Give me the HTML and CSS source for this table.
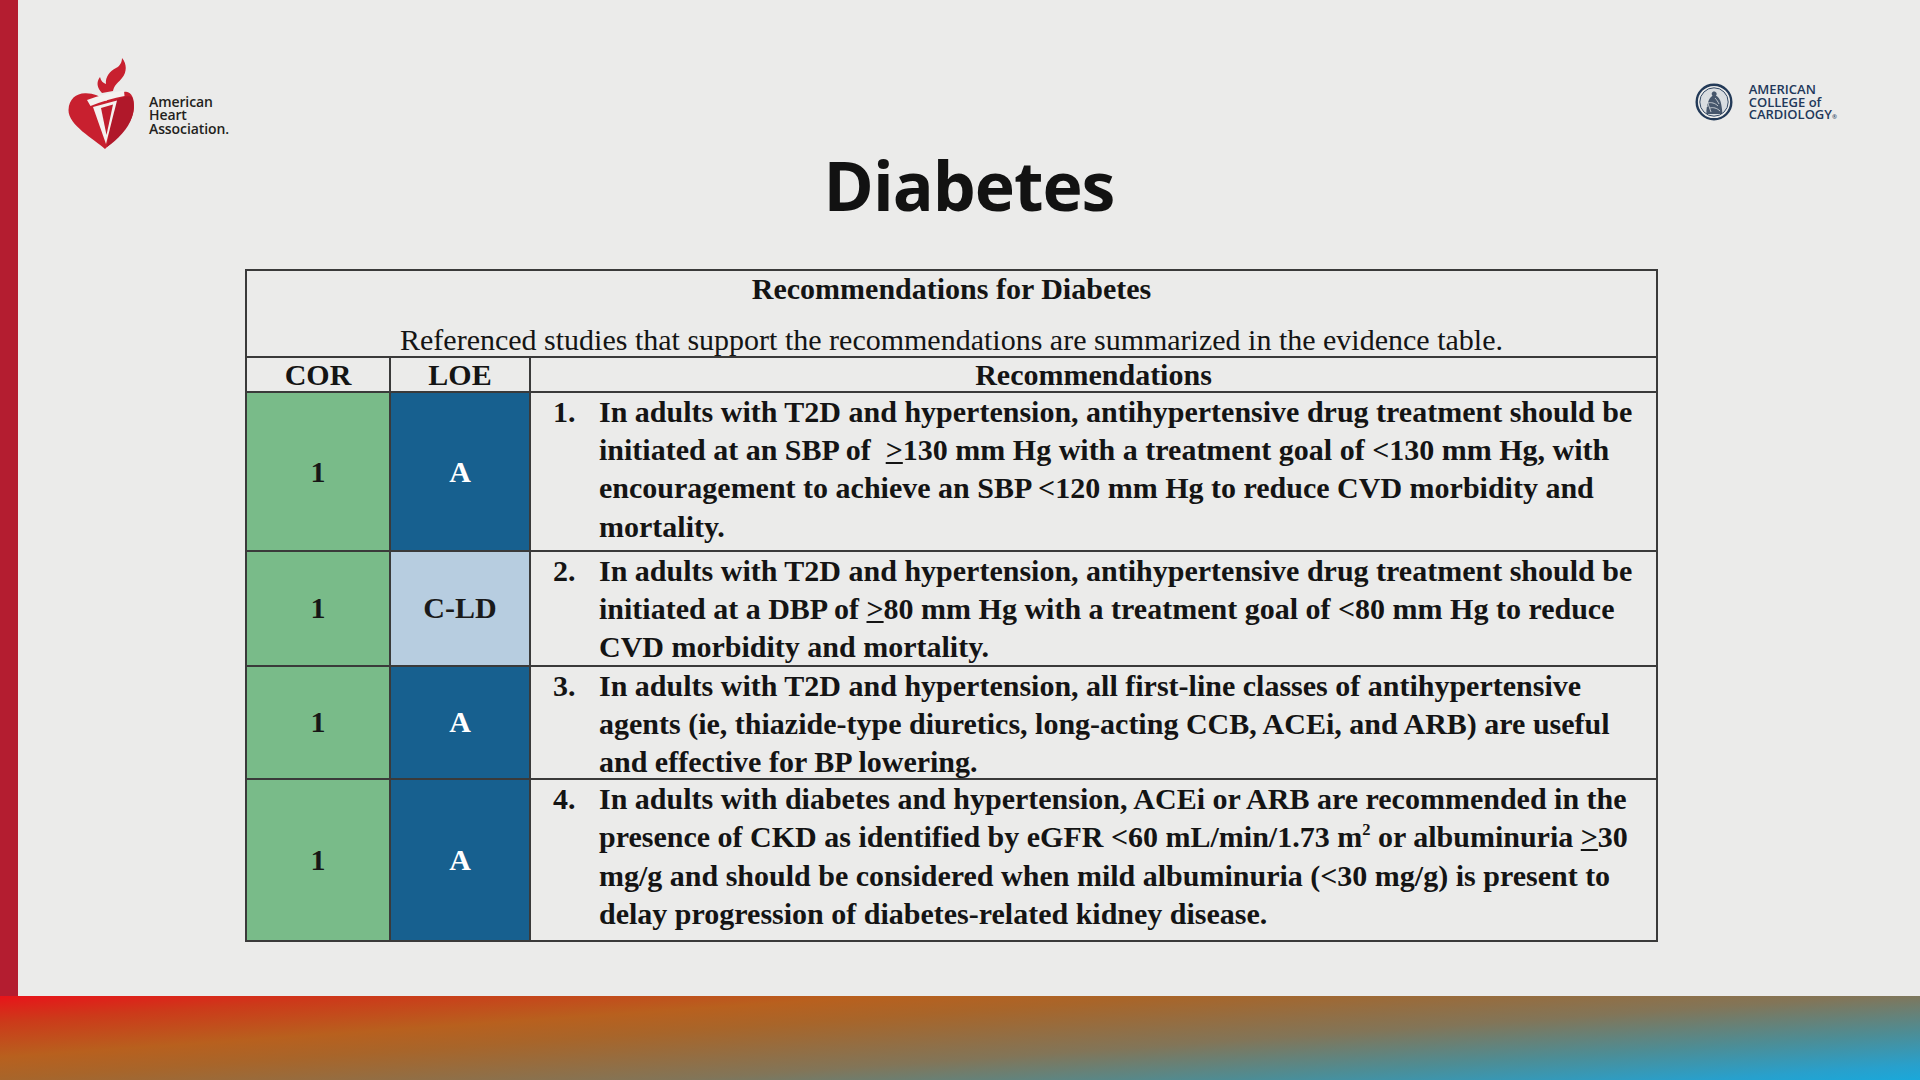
FILE: index.html
```html
<!DOCTYPE html>
<html lang="en">
<head>
<meta charset="utf-8">
<title>Diabetes</title>
<link rel="stylesheet" href="styles.css">
</head>
<body>
<div class="slide">
  <div class="stage">
    <div class="accent"></div>
    <main class="content">
      <header class="header">
        <div class="aha">
          <svg class="aha-mark" viewBox="0 0 72 96" aria-hidden="true">
            <path class="heart" d="M39 94 C28 84 2 70 2.5 55 C3 44 10 38.5 19 38.3 C27 38 34 41 40 46 C46 40 53 36.5 60 36.7 C66 37 68.5 44 68 53 C67 70 50 84 39 94 Z"/>
            <path class="heart-shade" d="M48 46 C56 42 62 40 66 42 C68.5 47 68 56 66 62 C62 74 52 84 41 92 Z"/>
            <path class="heart" d="M36 38 C31 33 30 27 34 22 C35 26 37 28 40 29 C39 22 44 16 50 13 C54 11 56 7 56 3 C61 9 61 17 56 23 C53 27 48 30 47 36 Z"/>
            <path class="torch" d="M21 45 Q40 38 58 35.5 L58.5 41 Q42 44 24.5 51 Z"/>
            <path class="torch" d="M27 52 L51 45.5 L40 89 Z"/>
            <path class="torch-core" d="M35 53 L47 49.5 L40.5 80 Z"/>
          </svg>
          <div class="aha-text">American<br>Heart<br>Association.</div>
        </div>
        <h1 class="title">Diabetes</h1>
        <div class="acc">
          <svg class="acc-mark" viewBox="0 0 38 38" aria-hidden="true">
            <circle cx="19" cy="19" r="17.3" class="ring"/>
            <circle cx="19" cy="19" r="14.2" class="inner"/>
            <path class="etch" d="M19 8.5 C21.5 8.5 22.5 11 21 12.8 C24 14 26 18 26.5 23 C27 26 27.5 29 27 31 L11.5 31 C11 27 12 22 13.5 18 C14.5 15 16.5 13.5 17.5 12.8 C16 11 16.8 8.5 19 8.5 Z"/>
            <path class="etch-line" d="M10 12 L16 29 M13 20 C16 19 20 20 23 23 M15 25 C18 24 22 25 25 28 M20 15 C22 17 23 19 24 21 M9 24 L13 23 M25 14 C27 15 28 17 28.5 19"/>
          </svg>
          <div class="acc-text">AMERICAN<br>COLLEGE of<br>CARDIOLOGY<span class="reg">®</span></div>
        </div>
      </header>

      <table class="recs">
        <colgroup>
          <col class="col-cor">
          <col class="col-loe">
          <col class="col-rec">
        </colgroup>
        <thead>
          <tr class="caption-row">
            <th colspan="3">
              <div class="cap-title">Recommendations for Diabetes</div>
              <div class="cap-sub">Referenced studies that support the recommendations are summarized in the evidence table.</div>
            </th>
          </tr>
          <tr class="head-row">
            <th>COR</th>
            <th>LOE</th>
            <th>Recommendations</th>
          </tr>
        </thead>
        <tbody>
          <tr class="row-a">
            <td class="cor">1</td>
            <td class="loe loe-a">A</td>
            <td class="rec"><div class="item"><span class="num">1.</span><span class="txt">In adults with T2D and hypertension, antihypertensive drug treatment should be initiated at an SBP of &nbsp;<span class="ge">&gt;</span>130 mm Hg with a treatment goal of &lt;130 mm Hg, with encouragement to achieve an SBP &lt;120 mm Hg to reduce CVD morbidity and mortality.</span></div></td>
          </tr>
          <tr class="row-b">
            <td class="cor">1</td>
            <td class="loe loe-c">C-LD</td>
            <td class="rec"><div class="item"><span class="num">2.</span><span class="txt">In adults with T2D and hypertension, antihypertensive drug treatment should be initiated at a DBP of <span class="ge">&gt;</span>80 mm Hg with a treatment goal of &lt;80 mm Hg to reduce CVD morbidity and mortality.</span></div></td>
          </tr>
          <tr class="row-c">
            <td class="cor">1</td>
            <td class="loe loe-a">A</td>
            <td class="rec"><div class="item"><span class="num">3.</span><span class="txt">In adults with T2D and hypertension, all first-line classes of antihypertensive agents (ie, thiazide-type diuretics, long-acting CCB, ACEi, and ARB) are useful and effective for BP lowering.</span></div></td>
          </tr>
          <tr class="row-d">
            <td class="cor">1</td>
            <td class="loe loe-a">A</td>
            <td class="rec"><div class="item"><span class="num">4.</span><span class="txt">In adults with diabetes and hypertension, ACEi or ARB are recommended in the presence of CKD as identified by eGFR &lt;60 mL/min/1.73 m<sup>2</sup> or albuminuria <span class="ge">&gt;</span>30 mg/g and should be considered when mild albuminuria (&lt;30 mg/g) is present to delay progression of diabetes-related kidney disease.</span></div></td>
          </tr>
        </tbody>
      </table>
    </main>
  </div>
  <footer class="band"></footer>
</div>
</body>
</html>
```

FILE: styles.css
```css
html, body {
  margin: 0;
  padding: 0;
}

body {
  width: 1920px;
  height: 1080px;
  overflow: hidden;
  background: #ebebea;
  font-family: "Open Sans", "Liberation Sans", sans-serif;
}

.slide {
  display: grid;
  grid-template-rows: 996px 84px;
  width: 1920px;
  height: 1080px;
}

.stage {
  display: flex;
  min-height: 0;
}

.accent {
  width: 18px;
  flex: 0 0 18px;
  background: #b41d30;
}

.content {
  flex: 1;
  min-width: 0;
}

/* header */
.header {
  display: grid;
  grid-template-columns: 1fr auto 1fr;
  align-items: start;
}

.aha {
  display: flex;
  align-items: flex-start;
  margin-top: 55px;
  margin-left: 48px;
}

.aha-mark {
  width: 72px;
  height: 96px;
  flex: 0 0 72px;
}

.heart { fill: #c8202f; }
.heart-shade { fill: #b0182a; }
.torch { fill: #f4f1ef; }
.torch-core { fill: #c01d2d; }

.aha-text {
  margin-top: 40px;
  margin-left: 11px;
  font-family: "Open Sans", sans-serif;
  font-weight: 600;
  font-size: 14px;
  line-height: 13.3px;
  color: #231f20;
  letter-spacing: -0.1px;
}

.title {
  margin: 151px 0 0;
  font-family: "Open Sans", "Liberation Sans", sans-serif;
  font-weight: 700;
  font-size: 68px;
  line-height: 68px;
  letter-spacing: -1px;
  color: #121212;
}

.acc {
  justify-self: end;
  display: flex;
  align-items: flex-start;
  margin-top: 83px;
  margin-right: 83px;
}

.acc-mark {
  width: 38px;
  height: 38px;
  flex: 0 0 38px;
}

.ring { fill: none; stroke: #233a58; stroke-width: 2.4; }
.inner { fill: #d9dde1; stroke: #233a58; stroke-width: 0.9; }
.etch { fill: #2b3e57; opacity: 0.85; }
.etch-line { fill: none; stroke: #dfe3e6; stroke-width: 0.8; }

.acc-text {
  margin-left: 16px;
  font-family: "Open Sans", sans-serif;
  font-weight: 600;
  font-size: 13px;
  line-height: 12.5px;
  color: #22385a;
}

.reg {
  font-size: 6px;
  vertical-align: baseline;
}

/* table */
.recs {
  border-collapse: collapse;
  table-layout: fixed;
  width: 1411px;
  margin: 50px 0 0 227px;
  font-family: "Liberation Serif", "Times New Roman", serif;
  font-size: 30px;
  color: #141414;
}

.col-cor { width: 144px; }
.col-loe { width: 140px; }
.col-rec { width: 1127px; }

.recs th,
.recs td {
  border: 2px solid #3a3a3a;
  padding: 0;
}

.caption-row th {
  height: 82px;
  vertical-align: top;
  text-align: center;
  font-weight: 400;
  padding-top: 3px;
}

.cap-title {
  font-weight: 700;
  line-height: 30px;
}

.cap-sub {
  margin-top: 21px;
  line-height: 30px;
}

.head-row th {
  height: 33px;
  font-weight: 700;
  line-height: 31px;
  text-align: center;
  vertical-align: middle;
}

.row-a { height: 159px; }
.row-b { height: 112px; }
.row-c { height: 111px; }
.row-d { height: 162px; }

.row-b .item { margin-bottom: -2px; }
.row-c .item { margin-bottom: -3px; }

.cor {
  background: #79bb89;
  text-align: center;
  vertical-align: middle;
  font-weight: 700;
  color: #161616;
}

.loe {
  text-align: center;
  vertical-align: middle;
  font-weight: 700;
}

.loe-a {
  background: #17608f;
  color: #ffffff;
}

.loe-c {
  background: #b7cde0;
  color: #1a1a1a;
}

.rec {
  vertical-align: top;
  font-weight: 700;
  line-height: 38.2px;
}

.item {
  display: flex;
  padding-left: 22px;
  padding-right: 8px;
}

.num {
  flex: 0 0 46px;
}

.txt {
  flex: 1;
}

.ge {
  text-decoration: underline;
  text-decoration-thickness: 2px;
  text-underline-offset: 2px;
}

sup {
  font-size: 0.55em;
  line-height: 0;
  vertical-align: 0.7em;
}

/* footer band */
.band {
  background: linear-gradient(176deg,
    #e8141a 0%,
    #cc3a1a 12%,
    #b8601e 28%,
    #a8652a 38%,
    #9c6a38 45%,
    #827558 60%,
    #4d8d95 78%,
    #28a0cc 93%,
    #1aa8da 100%);
}
```
